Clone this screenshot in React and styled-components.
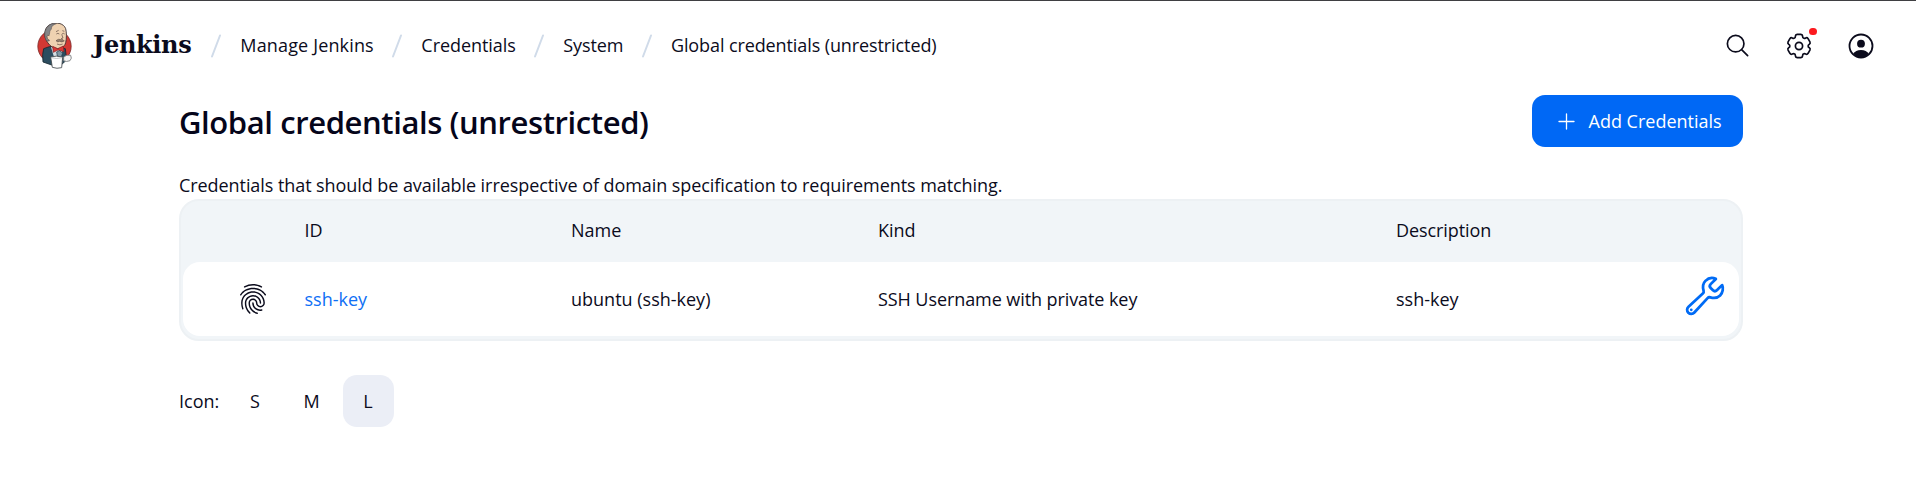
import React from "react";
import styled, { createGlobalStyle } from "styled-components";
import { IoFingerPrintOutline, IoBuildOutline, IoSearchOutline } from "react-icons/io5";

const GlobalStyle = createGlobalStyle`
  * { box-sizing: border-box; }
  body {
    margin: 0;
    background: #fff;
    color: #0b0b1c;
    font-family: "Open Sans", "Noto Sans", sans-serif;
    font-size: 18px;
    line-height: 24px;
  }
`;

const Header = styled.header`
  display: flex;
  align-items: center;
  justify-content: space-between;
  height: 90px;
  padding: 0 42px 0 37px;
  border-top: 1px solid #3f3f42;
`;

const Breadcrumbs = styled.nav`
  display: flex;
  align-items: center;
  padding-bottom: 1px;
`;

const Brand = styled.a`
  display: flex;
  align-items: center;
  gap: 21px;
  margin-right: 1.5px;
  font: 700 24px/30px "DejaVu Serif", serif;
  letter-spacing: -0.35px;
  white-space: nowrap;
  svg { margin-top: 1px; }
`;

const Crumb = styled.a`
  white-space: nowrap;
  letter-spacing: ${(p) => p.$tracking || 0}px;
`;

const SlashIcon = styled.svg`
  display: block;
  flex: none;
  width: 10px;
  height: 24px;
  margin: 1px 19px 0 18.5px;
  stroke: #d0dbe9;
  stroke-width: 2;
  stroke-linecap: round;
`;

const Actions = styled.div`
  display: flex;
  align-items: center;
  svg { display: block; }
`;

const GearButton = styled.div`
  position: relative;
  margin: 0 36px 0 35.5px;
`;

const Notification = styled.span`
  position: absolute;
  top: -5px;
  right: -4.5px;
  width: 7.5px;
  height: 7.5px;
  border-radius: 50%;
  background: #fc1a1f;
`;

const Main = styled.main`
  width: 1564px;
  margin-left: 179px;
  padding-top: 5px;
`;

const TitleBar = styled.div`
  display: flex;
  align-items: center;
  justify-content: space-between;
  height: 52px;
`;

const Title = styled.h1`
  margin: 1px 0 0;
  font-size: 31px;
  line-height: 40px;
  font-weight: 600;
  letter-spacing: -0.4px;
  color: #05051a;
`;

const AddButton = styled.a`
  display: flex;
  align-items: center;
  gap: 13.5px;
  height: 52px;
  width: 211px;
  padding-left: 26px;
  border-radius: 13px;
  background: #0068f5;
  color: #fff;
  white-space: nowrap;
`;

const Description = styled.p`
  margin: 26px 0 0;
  height: 26px;
  letter-spacing: -0.07px;
`;

const Table = styled.div`
  height: 142px;
  padding: 0 2px 3px;
  border: 2px solid #edf1f4;
  border-radius: 20px;
  background: #f1f5f8;
`;

const Row = styled.div`
  display: grid;
  grid-template-columns: 121.5px 266.5px 307px 518px 1fr auto;
  align-items: center;
  height: ${(p) => (p.$head ? "61px" : "74px")};
  padding-bottom: ${(p) => (p.$head ? "3px" : "0")};
  border-radius: 17px;
  background: ${(p) => (p.$head ? "transparent" : "#fff")};
`;

const Cell = styled.div`
  white-space: nowrap;
  letter-spacing: ${(p) => p.$tracking || 0}px;
  color: ${(p) => (p.$link ? "#0f6ff5" : "inherit")};
`;

const TypeCell = styled.div`
  display: flex;
  justify-content: flex-end;
  padding-right: 36px;
`;

const ActionCell = styled.div`
  display: flex;
  justify-content: flex-end;
  padding: 0 12px 7px 0;
  color: #006bf5;
`;

const IconSizes = styled.div`
  display: flex;
  align-items: center;
  gap: 5.5px;
  height: 52px;
  margin-top: 34px;
`;

const SizeLabel = styled.span`
  width: 45px;
`;

const SizeButton = styled.span`
  display: flex;
  align-items: center;
  justify-content: center;
  width: 51px;
  height: 52px;
  border-radius: 14px;
  background: ${(p) => (p.$active ? "#ebeef6" : "transparent")};
`;

const Slash = () => (
  <SlashIcon viewBox="0 0 10 24"><path d="M1 22.5 9 1.5" /></SlashIcon>
);

const Butler = () => (
  <svg width="35" height="46" viewBox="22 22 105 138">
    <ellipse cx="74.500" cy="92" rx="50" ry="50" fill="#d33833" stroke="#7d2a2a" strokeWidth="2.500" />
    <path d="M42 99q-5 16-2 40l26 9h28l17-15-4-34-22-6-26 0z" fill="#2c4d5f" stroke="#142630" strokeWidth="2.500" />
    <path d="M64 94l10 34 20-2 6-30z" fill="#d5dee3" />
    <path d="M51 76c-10-16-8-44 14-51 17-6 37-2 43 14 3 10 3 31 0 42-3 13-17 20-29 17-11-1-19-8-28-22z" fill="#efd2b1" stroke="#30272a" strokeWidth="2.500" />
    <path d="M51 76c-9-13-7-35 5-45 6-6 15-8 24-7-11 3-15 9-15 17-6 3-4 9-6 16-5 5-3 12 0 19z" fill="#858587" stroke="#4c484a" strokeWidth="1.500" />
    <path d="M59 60q-6-4-7 3t7 11" fill="#efd2b1" stroke="#5b4740" strokeWidth="2" />
    <path d="M79 48l8-4M98 45l6 2M80 55q5-4 9 0M97 55q4-4 8 0M96 56l4 11-6 2" fill="none" stroke="#5b4740" strokeWidth="2" />
    <path d="M79 75q8-7 15-3 7-2 10 4-8 5-14 1-6 4-11-2z" fill="#98826f" stroke="#4e403a" strokeWidth="1.500" />
    <path d="M82 85q9 5 17 0" fill="none" stroke="#5b4740" strokeWidth="2" />
    <path d="M69 92l15 7 17-8 2 17-18-5-14 7z" fill="#db3936" stroke="#811e20" strokeWidth="2" />
    <path d="M81 109l9-4 9 8-5 11-11-3z" fill="#8199a5" stroke="#20394a" strokeWidth="2" />
    <path d="M102 124q9-8 21-5 5 9-2 16-11 5-19 0z" fill="#f3f3f3" stroke="#777b7d" strokeWidth="2.500" />
    <path d="M63 124q16-5 36 0l-3 32q-14 4-28-1z" fill="#fff" stroke="#41484c" strokeWidth="2.500" />
    <path d="M64 126q16 5 34 0" fill="none" stroke="#a6adb0" strokeWidth="2" />
  </svg>
);

const gearPath = (() => {
  const at = (deg, r) => {
    const a = (deg * Math.PI) / 180;
    return `${(13 + r * Math.cos(a)).toFixed(2)} ${(13 + r * Math.sin(a)).toFixed(2)}`;
  };
  let d = "";
  for (let i = 0; i < 6; i++) {
    const c = -90 + i * 60;
    d += `${i ? "L" : "M"}${at(c - 20, 10.5)}Q${at(c - 17, 11.9)} ${at(c - 9, 11.7)}L${at(c + 9, 11.7)}Q${at(c + 17, 11.9)} ${at(c + 20, 10.5)}Q${at(c + 24, 8.8)} ${at(c + 30, 9.2)}Q${at(c + 36, 8.8)} ${at(c + 40, 10.5)}`;
  }
  return d + "Z";
})();

const Gear = () => (
  <svg width="26" height="26" viewBox="0 0 26 26" fill="none" stroke="#0b0b1c" strokeWidth="1.700" strokeLinejoin="round">
    <path d={gearPath} />
    <circle cx="13" cy="13" r="3.600" />
  </svg>
);

const Person = () => (
  <svg width="26" height="26" viewBox="0 0 26 26">
    <circle cx="13" cy="13" r="11.500" fill="none" stroke="#0b0b1c" strokeWidth="1.800" />
    <circle cx="13" cy="10.700" r="3.900" fill="#0b0b1c" />
    <path d="M5.200 20.800Q7.500 16.900 13 16.900T20.800 20.800Q17.500 24.500 13 24.500T5.200 20.800Z" fill="#0b0b1c" />
  </svg>
);

const Plus = () => (
  <svg width="17" height="17" viewBox="0 0 17 17" stroke="#fff" strokeWidth="1.300" strokeLinecap="round">
    <path d="M8.500 1v15M1 8.500h15" />
  </svg>
);

export default function App() {
  return (
    <>
      <GlobalStyle />
      <Header>
        <Breadcrumbs>
          <Brand><Butler />Jenkins</Brand>
          <Slash />
          <Crumb $tracking={0.15}>Manage Jenkins</Crumb>
          <Slash />
          <Crumb $tracking={-0.05}>Credentials</Crumb>
          <Slash />
          <Crumb $tracking={-0.1}>System</Crumb>
          <Slash />
          <Crumb $tracking={-0.1}>Global credentials (unrestricted)</Crumb>
        </Breadcrumbs>
        <Actions>
          <IoSearchOutline size={27} />
          <GearButton><Gear /><Notification /></GearButton>
          <Person />
        </Actions>
      </Header>
      <Main>
        <TitleBar>
          <Title>Global credentials (unrestricted)</Title>
          <AddButton><Plus />Add Credentials</AddButton>
        </TitleBar>
        <Description>
          Credentials that should be available irrespective of domain specification to requirements matching.
        </Description>
        <Table>
          <Row $head>
            <span />
            <Cell>ID</Cell>
            <Cell>Name</Cell>
            <Cell>Kind</Cell>
            <Cell $tracking={-0.08}>Description</Cell>
          </Row>
          <Row>
            <TypeCell><IoFingerPrintOutline size={32} /></TypeCell>
            <Cell $link>ssh-key</Cell>
            <Cell>ubuntu (ssh-key)</Cell>
            <Cell $tracking={-0.08}>SSH Username with private key</Cell>
            <Cell>ssh-key</Cell>
            <ActionCell><IoBuildOutline size={44} /></ActionCell>
          </Row>
        </Table>
        <IconSizes>
          <SizeLabel>Icon:</SizeLabel>
          <SizeButton>S</SizeButton>
          <SizeButton>M</SizeButton>
          <SizeButton $active>L</SizeButton>
        </IconSizes>
      </Main>
    </>
  );
}
